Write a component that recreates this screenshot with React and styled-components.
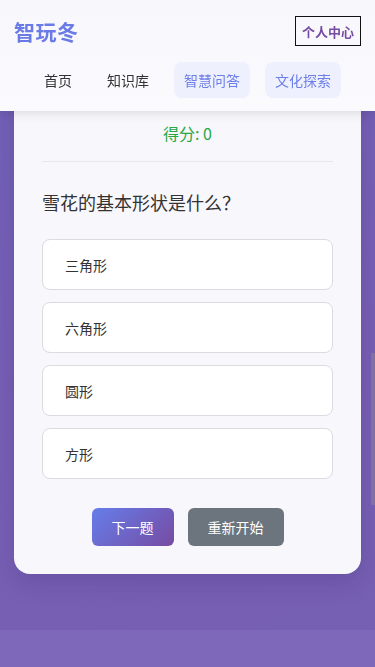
import React from 'react';
import styled, { createGlobalStyle } from 'styled-components';

const GlobalStyle = createGlobalStyle`
  html, body {
    margin: 0;
    padding: 0;
  }
  body {
    font-family: "Noto Sans CJK SC", "Microsoft YaHei", "Noto Sans", sans-serif;
    background: linear-gradient(160deg, #7262b8 0%, #785fb4 60%, #7560b2 100%);
    min-height: 100vh;
  }
  * { box-sizing: border-box; }
`;

const options = ['三角形', '六角形', '圆形', '方形'];

const navItems = [
  { label: '首页', active: false },
  { label: '知识库', active: false },
  { label: '智慧问答', active: true },
  { label: '文化探索', active: true },
];

function App() {
  return (
    <>
      <GlobalStyle />
      <StyledHeader>
        <div className="top">
          <div className="logo">智玩冬</div>
          <button className="profile">个人中心</button>
        </div>
        <Nav>
          {navItems.map((item) => (
            <NavItem key={item.label} $active={item.active}>{item.label}</NavItem>
          ))}
        </Nav>
      </StyledHeader>
      <Main>
        <QuizCard>
          <div className="score">得分: 0</div>
          <div className="question">雪花的基本形状是什么？</div>
          <OptionList>
            {options.map((o) => (
              <Option key={o}>{o}</Option>
            ))}
          </OptionList>
          <Actions>
            <ActionButton $variant="primary">下一题</ActionButton>
            <ActionButton $variant="secondary">重新开始</ActionButton>
          </Actions>
        </QuizCard>
      </Main>
      <Footer />
      <ScrollThumb />
    </>
  );
}

const StyledHeader = styled.header`
  position: fixed;
  top: 0;
  left: 0;
  right: 0;
  z-index: 10;
  height: 111px;
  background: linear-gradient(180deg, #f7f7fc 0%, #fbfbfe 100%);
  box-shadow: 0 2px 10px rgba(0, 0, 0, 0.12);
  padding: 16px 14px 0 14px;

  .top {
    display: flex;
    justify-content: space-between;
    align-items: center;
    height: 30px;
  }

  .logo {
    font-size: 21px;
    font-weight: 700;
    color: #6a7be6;
    letter-spacing: 0.5px;
  }

  .profile {
    font-family: inherit;
    background: transparent;
    border: 1.5px solid #111;
    color: #764ba2;
    font-weight: 700;
    font-size: 13px;
    height: 30px;
    padding: 0 6px;
    line-height: 1;
    cursor: pointer;
  }
`;

const Nav = styled.nav`
  display: flex;
  justify-content: center;
  gap: 15px;
  margin-top: 16px;
`;

const NavItem = styled.a`
  display: block;
  font-size: 14px;
  line-height: 20px;
  padding: 8px 10px;
  border-radius: 8px;
  color: ${(p) => (p.$active ? '#6d7fe8' : '#333')};
  background: ${(p) => (p.$active ? '#eef0fd' : 'transparent')};
`;

const Main = styled.main`
  padding: 80px 14px 56px 14px;
`;

const QuizCard = styled.section`
  background: #f8f7fc;
  border-radius: 16px;
  padding: 42px 28px 28px 28px;
  box-shadow: 0 8px 24px rgba(40, 20, 90, 0.18);

  .score {
    text-align: center;
    color: #28a745;
    font-size: 16px;
    line-height: 22px;
    padding-bottom: 17px;
    border-bottom: 1px solid #e8e7ef;
  }

  .question {
    margin-top: 27px;
    font-size: 18px;
    line-height: 26px;
    color: #333;
  }
`;

const OptionList = styled.div`
  display: flex;
  flex-direction: column;
  gap: 12px;
  margin-top: 24px;
`;

const Option = styled.div`
  height: 51px;
  display: flex;
  align-items: center;
  padding: 0 22px;
  background: #fff;
  border: 1px solid #dcdbe2;
  border-radius: 8px;
  font-size: 14px;
  color: #333;
`;

const Actions = styled.div`
  display: flex;
  justify-content: center;
  gap: 14px;
  margin-top: 29px;
`;

const ActionButton = styled.button`
  font-family: inherit;
  font-size: 14px;
  color: #fff;
  border: none;
  border-radius: 6px;
  height: 38px;
  padding: 0 20px;
  background: ${(p) =>
    p.$variant === 'primary'
      ? 'linear-gradient(135deg, #667eea 0%, #764ba2 100%)'
      : '#6c757d'};
  cursor: pointer;
`;

const Footer = styled.footer`
  height: 40px;
  background: #7e68ba;
`;

const ScrollThumb = styled.div`
  position: fixed;
  right: 0;
  top: 353px;
  width: 4px;
  height: 152px;
  background: rgba(140, 130, 150, 0.55);
`;

export default App;
